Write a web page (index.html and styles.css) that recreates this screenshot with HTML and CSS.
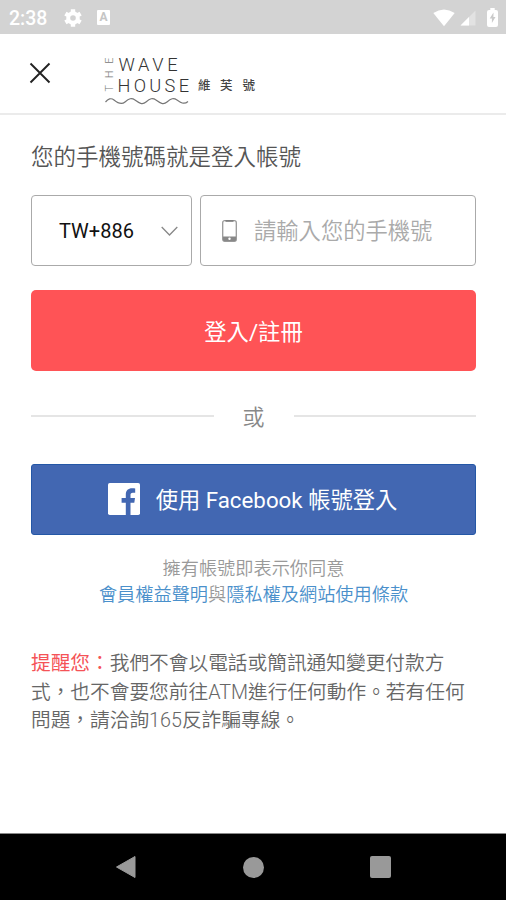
FILE: index.html
```html
<!DOCTYPE html>
<html lang="zh-Hant">
<head>
<meta charset="utf-8">
<meta name="viewport" content="width=device-width, initial-scale=1">
<title>THE WAVE HOUSE 維芙號</title>
<link rel="stylesheet" href="styles.css">
</head>
<body>
<div class="screen">
  <div class="status">
    <span class="clock">2:38</span>
    <svg class="gear" width="18" height="18" viewBox="0 0 18 18"><circle cx="9" cy="9" r="4.8" fill="none" stroke="#fff" stroke-width="4"/><g stroke="#fff" stroke-width="4.4"><path d="M9 0.2v3.3M9 14.5v3.3M1.4 4.6l2.8 1.6M13.8 11.8l2.8 1.6M1.4 13.4l2.8-1.6M13.8 6.2l2.8-1.6"/></g></svg>
    <span class="input-badge">A</span>
    <div class="indicators">
      <svg width="22" height="18" viewBox="0 0 22 18"><path d="M0.3 4Q11-3 21.7 4L11 17.2z" fill="#fff"/></svg>
      <svg width="16" height="16" viewBox="0 0 16 16"><path d="M15.5 0.5v15H0.5z" fill="#fff" opacity=".35"/><path d="M9 7v8.500H0.500z" fill="#fff"/></svg>
      <svg class="battery" width="11" height="19" viewBox="0 0 11 19"><path d="M3.300 0h4.400v2H9q2 0 2 2v13q0 2-2 2H2q-2 0-2-2V4q0-2 2-2h1.300z" fill="#fff"/><path d="M6.500 4.500L2.700 10.500h2.200v4.500l3.600-6H6.400z" fill="#cacaca"/></svg>
    </div>
  </div>
  <header class="header">
    <svg class="close" width="22" height="22" viewBox="0 0 22 22"><path d="M1.500 1.500l19 19M20.500 1.500l-19 19" stroke="#222" stroke-width="1.900"/></svg>
    <svg class="logo" width="160" height="56" viewBox="0 0 160 56">
      <g class="logo-latin">
        <text transform="translate(12.500 38.500) rotate(-90)" font-size="11" textLength="34" fill="#777">THE</text>
        <text x="18.500" y="17.800" font-size="18.200" textLength="59">WAVE</text>
        <text x="17.500" y="39" font-size="18.200" textLength="71.500">HOUSE</text>
      </g>
      <text class="logo-cjk" y="37.300" font-size="12.500"><tspan x="98">維</tspan><tspan x="120">芙</tspan><tspan x="142.500">號</tspan></text>
      <path d="M5.500 49C8 46 11 44.500 14 47S21 52.500 25 49S31.500 44.500 35 47S42 52.500 46 49S52.500 44.500 56 47S63 52.500 67 49S73.500 44.500 77 47S84 52 88 48.500" fill="none" stroke="#777" stroke-width="1.200"/>
    </svg>
  </header>
  <main class="content">
    <h1 class="title">您的手機號碼就是登入帳號</h1>
    <div class="fields">
      <div class="field country">
        <span>TW+886</span>
        <svg width="17" height="10" viewBox="0 0 17 10"><path d="M0.700 1l7.800 8 7.800-8" fill="none" stroke="#888" stroke-width="1.300"/></svg>
      </div>
      <div class="field phone">
        <svg width="15" height="22" viewBox="0 0 15 22"><rect x=".7" y=".7" width="13.600" height="20.600" rx="2" fill="none" stroke="#999" stroke-width="1.300"/><path d="M3.500 1h8" stroke="#777" stroke-width="1.500"/><path d="M1 16.500h13V20q0 1-1 1H2q-1 0-1-1z" fill="#888"/><circle cx="7.500" cy="18.800" r="1.200" fill="#fff"/></svg>
        <span>請輸入您的手機號</span>
      </div>
    </div>
    <div class="button login">登入/註冊</div>
    <div class="divider"><span>或</span></div>
    <div class="button facebook">
      <svg width="32" height="32" viewBox="0 0 32 32"><rect width="32" height="32" rx="1.800" fill="#fff"/><path d="M17.800 32V19.800h-4.200v-4.700h4.200v-3.500c0-4.100 2.500-6.300 6.200-6.300 1.500 0 2.500.1 3.200.2v4.300h-2.400c-1.800 0-2.300.9-2.300 2.300v3h4.500l-.7 4.700h-3.800V32z" fill="#4267b2"/></svg>
      <span>使用 Facebook 帳號登入</span>
    </div>
    <p class="consent">擁有帳號即表示你同意<br><a>會員權益聲明</a>與<a>隱私權及網站使用條款</a></p>
    <p class="notice"><strong>提醒您：</strong>我們不會以電話或簡訊通知變更付款方<br>式，也不會要您前往ATM進行任何動作。若有任何<br>問題，請洽詢165反詐騙專線。</p>
  </main>
  <nav class="navbar">
    <svg width="22" height="24" viewBox="0 0 22 24"><path d="M1.500 12L20 1.500v21z" fill="#999" stroke="#999" stroke-linejoin="round"/></svg>
    <span class="home"></span>
    <span class="recents"></span>
  </nav>
</div>
</body>
</html>
```

FILE: styles.css
```css
* { box-sizing: border-box; }
body { margin: 0; background: #fff; font-family: Roboto, "Noto Sans CJK TC", sans-serif; }
svg { display: block; flex: none; }
.screen { width: 506px; height: 900px; display: flex; flex-direction: column; overflow: hidden; }
.status { height: 34px; flex: none; background: #d3d3d3; display: flex; align-items: center; padding: 1px 8px 0 9px; color: #fff; }
.clock { font-size: 19.5px; font-weight: 500; width: 55px; padding-top: 2px; }
.input-badge { width: 13px; height: 15px; margin: 0 0 0 15px; border-radius: 1px; background: #fff; color: #c5c5c5; font-size: 12px; line-height: 15px; font-weight: 700; text-align: center; }
.indicators { margin-left: auto; display: flex; align-items: center; gap: 5px; }
.battery { margin-left: 6px; }
.header { height: 81px; flex: none; border-bottom: 2px solid #ebebeb; display: flex; align-items: flex-start; padding: 19px 0 0 29px; }
.close { margin-top: 9px; }
.logo { margin-left: 49px; margin-top: 0; overflow: visible; }
.logo-latin { font-family: Roboto, sans-serif; font-weight: 300; fill: #333; }
.logo-cjk { font-family: "Noto Sans CJK TC", sans-serif; font-weight: 500; fill: #444; }
.content { flex: 1; padding: 25px 30px 0 31px; }
.title { margin: 0; font-size: 22.5px; line-height: 34px; font-weight: 350; color: #555; white-space: nowrap; }
.fields { display: flex; gap: 8px; margin-top: 21px; }
.field { height: 71px; border: 1.5px solid #aaa; border-radius: 4px; display: flex; align-items: center; }
.country { width: 161px; padding: 0 13px 0 27px; justify-content: space-between; font-size: 20px; color: #111; }
.phone { flex: 1; padding-left: 21px; gap: 17px; font-size: 22.3px; font-weight: 350; color: #aaa; white-space: nowrap; }
.phone span { padding-bottom: 3px; }
.button { display: flex; align-items: center; justify-content: center; color: #fff; font-size: 22.3px; white-space: nowrap; }
.login { height: 81px; margin-top: 24px; padding-bottom: 2px; border-radius: 5px; background: #ff5356; }
.divider { display: flex; align-items: center; gap: 29px; height: 34px; margin-top: 28px; color: #888; font-size: 22px; font-weight: 350; }
.divider span { padding-bottom: 2px; }
.divider::before, .divider::after { content: ""; flex: 1; height: 2px; background: #e5e5e5; }
.facebook { height: 71px; margin-top: 31px; padding: 0 2px 2px 0; border: 1px solid #2457a6; border-radius: 3px; background: #4267b2; gap: 16px; }
.facebook span { padding-bottom: 2px; }
.consent { margin: 21px 0 0; text-align: center; font-size: 18.2px; line-height: 25.5px; font-weight: 350; color: #999; }
.consent a { color: #4a90cb; }
.notice { margin: 43px 0 0; font-size: 19.7px; line-height: 28.6px; font-weight: 350; color: #666; white-space: nowrap; }
.notice strong { font-weight: 400; color: #f55357; }
.navbar { height: 67px; flex: none; background: #000; border-top: 1px solid #888; display: grid; grid-template-columns: repeat(3, 127px); justify-content: center; justify-items: center; align-items: center; }
.home { width: 21px; height: 21px; border-radius: 50%; background: #999; }
.recents { width: 21px; height: 22px; border-radius: 2px; background: #999; }
```
